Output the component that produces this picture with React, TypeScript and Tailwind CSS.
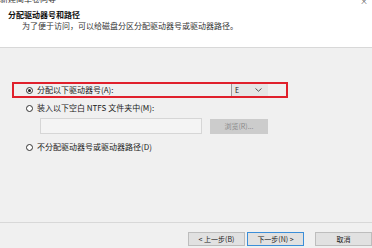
import React from "react";

function Radio({ checked }: { checked?: boolean }) {
  return (
    <span className="flex h-[7px] w-[7px] shrink-0 items-center justify-center rounded-full border border-[#333] bg-white">
      {checked && <span className="h-[3px] w-[3px] rounded-full bg-[#222]" />}
    </span>
  );
}

export default function App() {
  return (
    <div
      className="flex h-[248px] w-[372px] flex-col overflow-hidden bg-[#f0f0f0] text-[8px] leading-none text-[#1a1a1a]"
      style={{ fontFamily: '"Noto Sans CJK SC", "Liberation Sans", sans-serif' }}
    >
      <header className="relative h-[48px] shrink-0 border-b border-[#d8d8d8] bg-white">
        <div className="absolute -top-[5px] left-0 text-[8px] text-[#333]">新建简单卷向导</div>
        <div className="absolute -top-[3px] right-[4px] text-[8px] text-[#555]">×</div>
        <div className="pl-[8px] pt-[11px] font-bold text-[#111]">分配驱动器号和路径</div>
        <div className="pl-[22px] pt-[3px] text-[#333]">为了便于访问，可以给磁盘分区分配驱动器号或驱动器路径。</div>
      </header>

      <main className="flex flex-1 flex-col pl-[12px] pt-[34px]">
        <div className="flex h-[16px] w-[276px] items-center border-2 border-[#e0202c] pl-[12px]">
          <Radio checked />
          <span className="ml-[4px]">分配以下驱动器号(A):</span>
          <div className="ml-auto mr-[18px] flex h-[12px] w-[37px] items-center justify-between border-l border-[#9a9a9a] bg-[#e6e6e6] px-[3px]">
            <span className="text-[7px]">E</span>
            <svg width="7" height="4" viewBox="0 0 7 4" className="mr-[3px]">
              <path d="M0.5 0.5 L3.5 3.2 L6.5 0.5" fill="none" stroke="#444" strokeWidth="0.9" />
            </svg>
          </div>
        </div>

        <div className="mt-[6px] flex items-center pl-[14px]">
          <Radio />
          <span className="ml-[4px]">装入以下空白 NTFS 文件夹中(M):</span>
        </div>

        <div className="mt-[6px] flex items-center pl-[28px]">
          <div className="h-[16px] w-[162px] border border-[#d6d6d6] bg-[#f4f4f4]" />
          <div className="ml-[8px] flex h-[15px] w-[58px] items-center justify-center bg-[#cccccc] text-[7px] text-[#8a8a8a]">
            浏览(R)...
          </div>
        </div>

        <div className="mt-[9px] flex items-center pl-[14px]">
          <Radio />
          <span className="ml-[4px]">不分配驱动器号或驱动器路径(D)</span>
        </div>
      </main>

      <footer className="flex h-[26px] shrink-0 items-start justify-end gap-[2px] border-t border-[#d8d8d8] pt-[9px]">
        <div className="flex h-[14px] w-[57px] items-center justify-center border border-[#bdbdbd] bg-[#e1e1e1] text-[7px]">
          &lt; 上一步(B)
        </div>
        <div className="flex h-[14px] w-[57px] items-center justify-center border border-[#3b8ed8] bg-[#e1e1e1] text-[7px]">
          下一步(N) &gt;
        </div>
        <div className="ml-[9px] flex h-[14px] w-[57px] items-center justify-center border border-[#bdbdbd] bg-[#e1e1e1] text-[7px]">
          取消
        </div>
      </footer>
    </div>
  );
}
